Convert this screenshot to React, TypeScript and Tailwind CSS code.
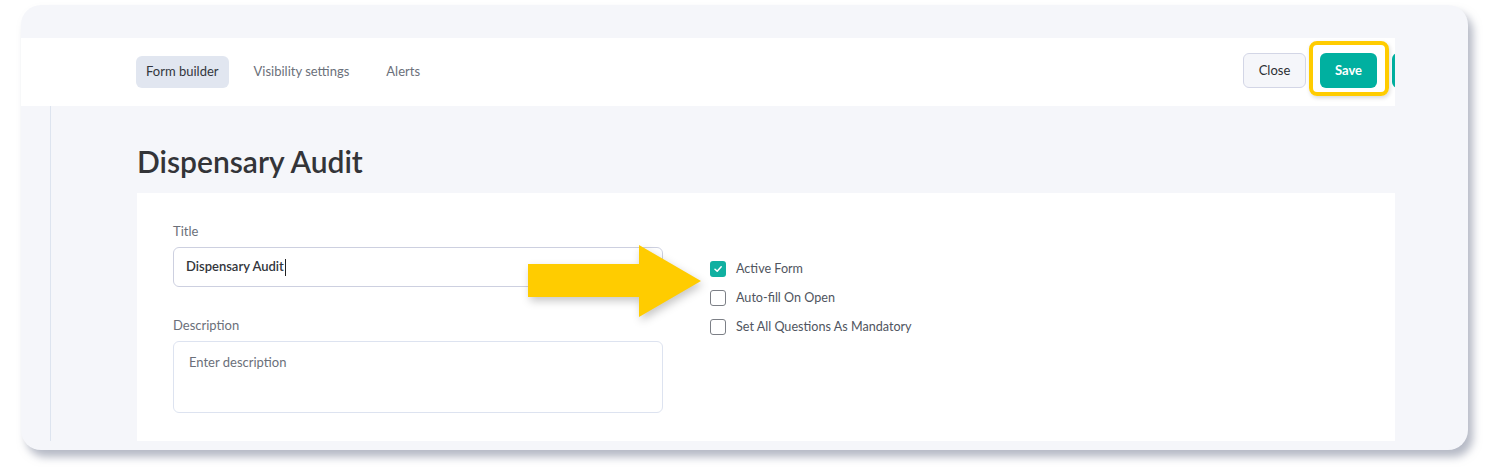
import React from "react";

function Checkbox({ checked, label }: { checked?: boolean; label: string }) {
  return (
    <div className="flex items-center h-[16px] gap-[10px]">
      {checked ? (
        <div className="w-[16px] h-[16px] rounded-[3px] bg-[#10b0a1] flex items-center justify-center">
          <svg width="10" height="10" viewBox="0 0 10 10" fill="none">
            <path d="M2 5.2 L4.2 7.3 L8.2 2.8" stroke="white" strokeWidth="1.5" strokeLinecap="round" strokeLinejoin="round" />
          </svg>
        </div>
      ) : (
        <div className="w-[16px] h-[16px] rounded-[3px] border-[1.5px] border-[#7c7f86] bg-white" />
      )}
      <span className="text-[12.6px] leading-[16px] text-[#505560]">{label}</span>
    </div>
  );
}

export default function App() {
  return (
    <div
      className="relative w-[1493px] h-[475px] bg-white overflow-hidden"
      style={{ fontFamily: "Lato, 'Noto Sans', 'Liberation Sans', sans-serif" }}
    >
      <div className="ml-[21px] mt-[5px] w-[1447px] h-[445px] rounded-[20px] bg-[#f5f6fa] overflow-hidden shadow-[5px_7px_9px_rgba(120,128,150,0.55)]">
        <div className="w-[1374px] h-[436px] flex flex-col overflow-hidden">
          <div className="h-[33px] shrink-0" />
          <div className="h-[68px] shrink-0 bg-white flex items-center pl-[115px]">
            <div className="flex items-center gap-[13px]">
              <div className="h-[32px] px-[10px] rounded-[6px] bg-[#e1e6f0] flex items-center text-[13px] text-[#33363c]">
                Form builder
              </div>
              <div className="h-[32px] px-[12px] flex items-center text-[13px] text-[#6b707a]">Visibility settings</div>
              <div className="h-[32px] px-[12px] flex items-center text-[13px] text-[#6b707a]">Alerts</div>
            </div>
            <div className="ml-auto mr-[-57px] flex items-center gap-[14px] mt-[-3px]">
              <div className="w-[63px] h-[35px] rounded-[6px] border border-[#d3d6e6] bg-[#f5f6fa] flex items-center justify-center text-[13px] text-[#2c2f34]">
                Close
              </div>
              <div className="w-[57px] h-[35px] rounded-[6px] bg-[#00b0a0] flex items-center justify-center text-[13px] font-bold text-white">
                Save
              </div>
              <div className="w-[60px] h-[35px] rounded-[6px] bg-[#00b0a0] ml-[1px]" />
            </div>
          </div>
          <div className="flex-1 flex">
            <div className="w-[30px] shrink-0 border-r border-[#dde4ef]" />
            <div className="flex-1 flex flex-col pl-[86px]">
              <h1 className="pt-[40px] text-[30px] leading-[30px] font-semibold text-[#333438]">Dispensary Audit</h1>
              <div className="mt-[17px] flex-1 bg-white pl-[36px] flex">
                <div className="w-[490px] flex flex-col pt-[30px]">
                  <div className="text-[13px] leading-[16px] text-[#6b707a]">Title</div>
                  <div className="mt-[8px] h-[40px] rounded-[6px] border border-[#cdd0e0] flex items-center pl-[12px] text-[13px] font-semibold text-[#33363c]">
                    Dispensary Audit
                    <span className="inline-block w-[1px] h-[17px] bg-[#222] ml-[1px]" />
                  </div>
                  <div className="mt-[30px] text-[13px] leading-[16px] text-[#6b707a]">Description</div>
                  <div className="mt-[8px] h-[72px] rounded-[6px] border border-[#dde3f0] pl-[15px] pt-[12px] text-[13px] leading-[16px] text-[#6b707a]">
                    Enter description
                  </div>
                </div>
                <div className="ml-[47px] pt-[68px] flex flex-col gap-[13px]">
                  <Checkbox checked label="Active Form" />
                  <Checkbox label="Auto-fill On Open" />
                  <Checkbox label="Set All Questions As Mandatory" />
                </div>
              </div>
            </div>
          </div>
        </div>
      </div>

      <div className="absolute left-[1309px] top-[41px] w-[80px] h-[55px] rounded-[8px] border-[4px] border-[#ffcc00] shadow-[1px_2px_4px_rgba(0,0,0,0.15)]" />

      <svg
        className="absolute left-[528px] top-[245px]"
        width="175"
        height="75"
        viewBox="0 0 175 75"
        style={{ filter: "drop-shadow(2px 4px 4px rgba(0,0,0,0.22))" }}
      >
        <rect x="0" y="19" width="112" height="33" fill="#ffcc00" />
        <polygon points="111,0 173,36 111,72" fill="#ffcc00" />
      </svg>
    </div>
  );
}
